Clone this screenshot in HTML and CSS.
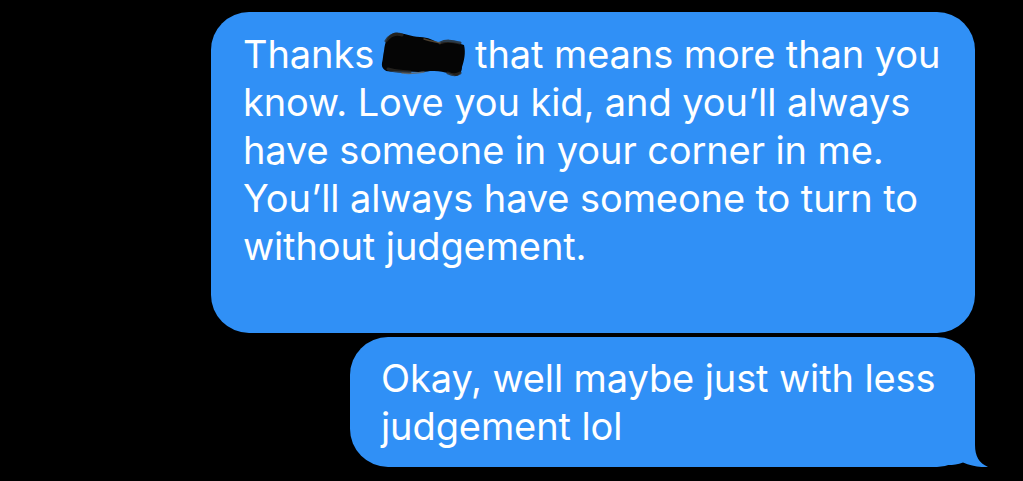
FILE: index.html
```
<!DOCTYPE html>
<html lang="en">
<head>
    <meta charset="UTF-8">
    <meta name="viewport" content="width=device-width, initial-scale=1.0">
    <title>Messages</title>
    <link rel="stylesheet" href="styles.css">
</head>
<body>

    <!-- Conversation thread -->
    <div class="thread">

        <!-- First sent message (name scribbled out) -->
        <div class="bubble bubble-long">
            Thanks<svg class="scribble" viewBox="0 0 86 46" width="86" height="46" aria-hidden="true">
                <path d="M4 20 C 5 10, 8 4, 14 2 C 22 1, 30 6, 40 6 C 48 6, 54 10, 60 12 C 66 10, 76 11, 84 14 C 86 22, 84 30, 82 36 C 82 40, 80 44, 76 45 C 70 42, 62 40, 50 40 C 40 42, 26 40, 14 40 C 6 42, 1 38, 2 32 C 3 28, 3 24, 4 20 Z" fill="#050505"/>
                <path d="M6 10 C 10 4, 16 2, 22 4 M60 12 C 66 9, 72 10, 80 12 M8 38 C 16 41, 24 40, 30 41 M68 42 C 72 44, 76 45, 80 42" fill="none" stroke="#2b2722" stroke-width="3" stroke-linecap="round" opacity="0.8"/>
                <path d="M44 8 C 50 10, 56 11, 60 12 M22 42 C 30 43, 38 42, 44 41" fill="none" stroke="#6b5a45" stroke-width="1.5" stroke-linecap="round" opacity="0.7"/>
            </svg>that means more than you<br>
            know. Love you kid, and you’ll always<br>
            have someone in your corner in me.<br>
            You’ll always have someone to turn to<br>
            without judgement.
        </div>

        <!-- Second sent message, last in group so it gets the tail -->
        <div class="bubble bubble-short">
            Okay, well maybe just with less<br>
            judgement lol
            <svg class="tail" viewBox="0 0 42 40" width="42" height="40" aria-hidden="true">
                <path d="M0 0 H27 V18 C27 29 31 36 40 40 C33 40.6 23 39 15 35.5 C10 37.5 5 38 0 38 Z" fill="#3090f6"/>
            </svg>
        </div>

    </div>

</body>
</html>
```

FILE: styles.css
```
/* Page */
body {
    margin: 0;
    background-color: #000;
    font-family: "Inter", "Liberation Sans", sans-serif;
}

/* Column of bubbles, aligned to the right */
.thread {
    display: flex;
    flex-direction: column;
    align-items: flex-end;
    gap: 4px;
    padding: 12px 48px 0 0;
}

/* Blue message bubble */
.bubble {
    position: relative;
    box-sizing: border-box;
    background-color: #3090f6;
    color: #fff;
    font-size: 38px;
    line-height: 48px;
    letter-spacing: -0.1px;
    border-radius: 38px;
    padding: 18px 30px 17px 32px;
    white-space: nowrap;
}

.bubble-long {
    width: 764px;
    padding-bottom: 63px;
}

.bubble-short {
    width: 625px;
    padding-top: 17px;
    padding-left: 31px;
}

/* Scribbled-out name */
.scribble {
    display: inline-block;
    vertical-align: -9px;
    margin: 0 9px 0 6px;
}

/* Tail on the last bubble */
.tail {
    position: absolute;
    right: -15px;
    bottom: 0;
}
```
